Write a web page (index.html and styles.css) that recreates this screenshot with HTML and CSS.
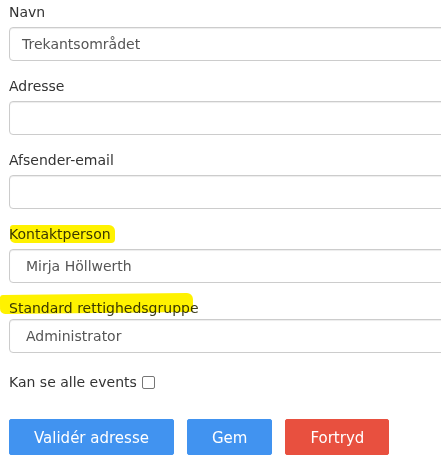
FILE: index.html
```html
<!DOCTYPE html>
<html lang="da">
<head>
<meta charset="utf-8">
<title>Indstillinger</title>
<link rel="stylesheet" href="styles.css">
</head>
<body>
<form class="form">
  <div class="group">
    <label class="label">Navn</label>
    <div class="input">Trekantsområdet</div>
  </div>
  <div class="group">
    <label class="label">Adresse</label>
    <div class="input"></div>
  </div>
  <div class="group">
    <label class="label">Afsender-email</label>
    <div class="input"></div>
  </div>
  <div class="group">
    <label class="label marked"><span class="hl hl-one"></span>Kontaktperson</label>
    <div class="input select">Mirja Höllwerth</div>
  </div>
  <div class="group">
    <label class="label marked tight"><span class="hl hl-two"></span>Standard rettighedsgruppe</label>
    <div class="input select">Administrator</div>
  </div>
  <div class="check-row">
    <span>Kan se alle events</span>
    <span class="checkbox"></span>
  </div>
  <div class="actions">
    <button type="button" class="btn btn-blue">Validér adresse</button>
    <button type="button" class="btn btn-blue">Gem</button>
    <button type="button" class="btn btn-red">Fortryd</button>
  </div>
</form>
</body>
</html>
```

FILE: styles.css
```css
html, body {
  margin: 0;
  padding: 0;
  background: #fff;
  overflow: hidden;
}
body {
  font-family: "DejaVu Sans", Verdana, sans-serif;
  font-size: 14px;
  line-height: 20px;
  color: #333;
}
.form {
  width: 480px;
  padding: 2px 0 0 9px;
}
.group {
  display: flex;
  flex-direction: column;
  margin-bottom: 15px;
}
.label {
  position: relative;
  display: block;
  margin-bottom: 5px;
  color: #333;
}
.label.tight {
  margin-bottom: 1px;
}
.hl {
  position: absolute;
  background: #fff200;
  mix-blend-mode: multiply;
  border-radius: 3px 6px 4px 5px;
}
.hl-one {
  left: 1px;
  top: 1px;
  width: 105px;
  height: 18px;
}
.hl-two {
  left: -9px;
  top: -4px;
  width: 193px;
  height: 19px;
  transform: rotate(-0.6deg);
}
.marked {
  color: #3a3a1a;
}
.input {
  box-sizing: border-box;
  height: 34px;
  padding: 6px 12px;
  border: 1px solid #ccc;
  border-radius: 4px;
  box-shadow: inset 0 1px 1px rgba(0,0,0,.075);
  color: #555;
  background: #fff;
  line-height: 20px;
}
.input.select {
  padding-left: 16px;
}
.check-row {
  display: flex;
  align-items: center;
  gap: 5px;
  margin-top: 19px;
  height: 20px;
  color: #333;
}
.checkbox {
  box-sizing: border-box;
  width: 13px;
  height: 13px;
  border: 1px solid #767676;
  border-radius: 2px;
  background: #fff;
}
.actions {
  display: flex;
  gap: 13px;
  margin-top: 27px;
}
.btn {
  font-family: "DejaVu Sans", Verdana, sans-serif;
  font-size: 15px;
  line-height: 20px;
  height: 36px;
  padding: 8px 24px;
  border: 1px solid transparent;
  border-radius: 2px;
  color: #fff;
  cursor: pointer;
}
.btn-blue {
  background: #4193f0;
  border-color: #4193f0;
}
.btn-red {
  background: #e8503f;
  border-color: #e8503f;
}
```
